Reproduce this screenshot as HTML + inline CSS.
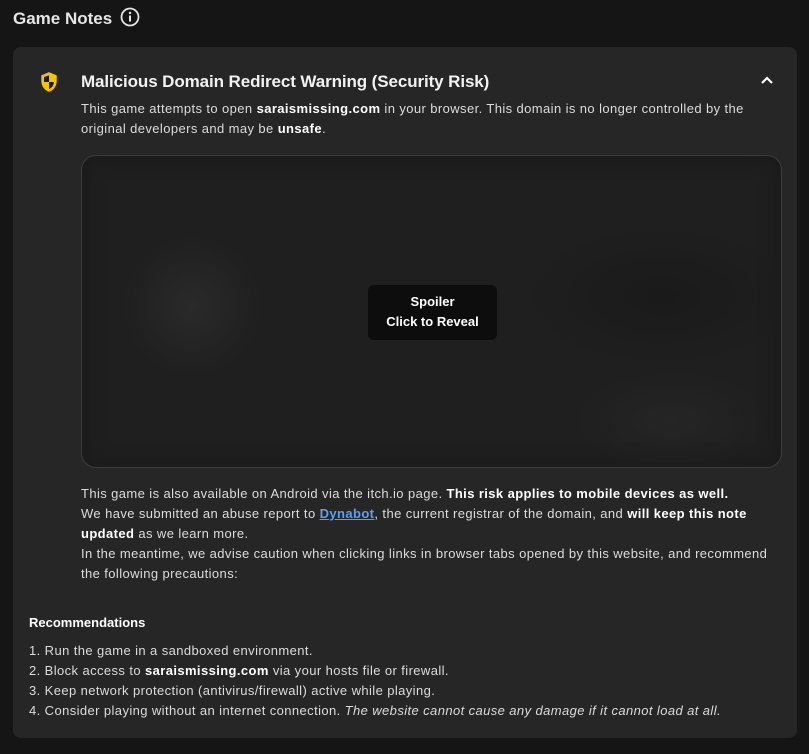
<!DOCTYPE html>
<html><head><meta charset="utf-8"><style>
body{margin:0;width:809px;height:754px;background:#151515;font-family:"Liberation Sans",sans-serif;color:#e0e0e0;overflow:hidden;position:relative}
.h{position:absolute;left:13px;top:7px;font-size:17px;font-weight:bold;color:#e6e6e6}
.card{position:absolute;left:13px;top:47px;width:784px;height:691px;background:#262626;border-radius:8px}
.t{position:absolute;left:68px;top:25px;font-size:17px;font-weight:bold;color:#f2f2f2;letter-spacing:-0.1px}
p{margin:0;font-size:13px;line-height:20px;color:#dcdcdc;letter-spacing:0.4px}
b{color:#fff}
.sp{position:absolute;left:68px;top:108px;width:699px;height:311px;border:1px solid #3c3c3c;border-radius:15px;background:radial-gradient(ellipse 70px 70px at 110px 150px,#2a2a2a,transparent),radial-gradient(ellipse 100px 50px at 590px 265px,#252525,transparent),radial-gradient(ellipse 140px 70px at 580px 140px,#1a1a1a,transparent),#1f1f1f;box-shadow:inset 0 0 20px #191919}
.btn{position:absolute;left:286px;top:129px;width:129px;height:55px;background:#0d0d0d;border-radius:6px;color:#fff;font-weight:bold;font-size:13px;line-height:20px;text-align:center;padding-top:7px;box-sizing:border-box;letter-spacing:0}
a{color:#5aa0f0;font-weight:bold;text-decoration:underline}
</style></head><body>
<div class="h">Game Notes <svg style="vertical-align:-3px;margin-left:3px" width="20" height="20" viewBox="0 0 20 20"><circle cx="10" cy="10" r="8.5" fill="none" stroke="#e6e6e6" stroke-width="1.8"/><rect x="9" y="8.5" width="2" height="6" fill="#e6e6e6"/><circle cx="10" cy="6" r="1.2" fill="#e6e6e6"/></svg></div>
<div class="card">
<svg style="position:absolute;left:26px;top:24px" width="20" height="22" viewBox="0 0 18 20"><path d="M9 1L2 4v5c0 5 3 8.5 7 10 4-1.5 7-5 7-10V4z" fill="#f5c400"/><path d="M9 4v6H4.5V5.5zM9 10h4.5c-.3 3-2 5.5-4.5 6.5z" fill="#1a1a1a"/></svg>
<div class="t">Malicious Domain Redirect Warning (Security Risk)</div>
<svg style="position:absolute;left:747px;top:28px" width="14" height="10" viewBox="0 0 14 10"><path d="M2 8l5-5 5 5" fill="none" stroke="#fff" stroke-width="2.2"/></svg>
<p style="position:absolute;left:68px;top:52px;width:700px">This game attempts to open <b>saraismissing.com</b> in your browser. This domain is no longer controlled by the original developers and may be <b>unsafe</b>.</p>
<div class="sp"><div class="btn">Spoiler<br>Click to Reveal</div></div>
<p style="position:absolute;left:68px;top:437px;width:700px">This game is also available on Android via the itch.io page. <b>This risk applies to mobile devices as well.</b><br>We have submitted an abuse report to <a>Dynabot</a>, the current registrar of the domain, and <b>will keep this note updated</b> as we learn more.<br>In the meantime, we advise caution when clicking links in browser tabs opened by this website, and recommend the following precautions:</p>
<p style="position:absolute;left:16px;top:566px;font-weight:bold;color:#fff;letter-spacing:0">Recommendations</p>
<p style="position:absolute;left:16px;top:594px;width:765px">1. Run the game in a sandboxed environment.<br>2. Block access to <b>saraismissing.com</b> via your hosts file or firewall.<br>3. Keep network protection (antivirus/firewall) active while playing.<br>4. Consider playing without an internet connection. <i>The website cannot cause any damage if it cannot load at all.</i></p>
</div>
</body></html>
